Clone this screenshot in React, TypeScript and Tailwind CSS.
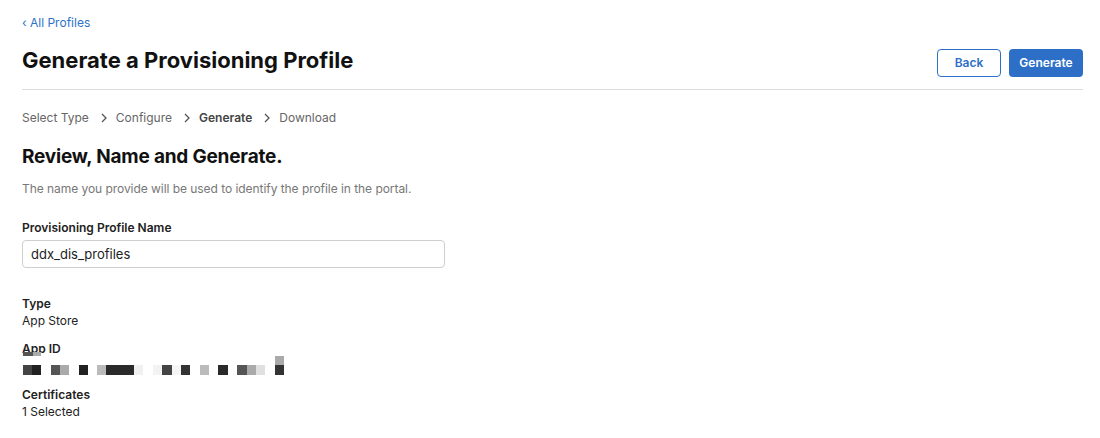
const steps = [
  { id: 1, label: "Select Type", current: false },
  { id: 2, label: "Configure", current: false },
  { id: 3, label: "Generate", current: true },
  { id: 4, label: "Download", current: false },
];

// redacted App ID, drawn as mosaic cells: [x, y, w, h, colour]
const mosaic: [number, number, number, number, string][] = [
  [1, 2, 10, 4, "#555"],
  [11, 2, 8, 4, "#aaa"],
  [253, 6, 9, 9, "#aaa"],
  [1, 15, 9, 10, "#444"],
  [10, 15, 9, 10, "#222"],
  [29, 15, 9, 10, "#555"],
  [38, 15, 9, 10, "#aaa"],
  [57, 15, 9, 10, "#222"],
  [75, 15, 9, 10, "#bbb"],
  [84, 15, 28, 10, "#2a2a2a"],
  [112, 15, 9, 10, "#f0f0f0"],
  [131, 15, 9, 10, "#f3f3f3"],
  [140, 15, 10, 10, "#444"],
  [150, 15, 9, 10, "#f5f5f5"],
  [159, 15, 9, 10, "#333"],
  [178, 15, 9, 10, "#bbb"],
  [196, 15, 10, 10, "#2a2a2a"],
  [215, 15, 10, 10, "#555"],
  [225, 15, 9, 10, "#aaa"],
  [234, 15, 9, 10, "#e0e0e0"],
  [253, 15, 9, 10, "#333"],
];

function Chevron() {
  return (
    <svg width="6" height="10" viewBox="0 0 6 10" className="ml-[12px] mr-[9px]">
      <path d="M1 1l4 4-4 4" fill="none" stroke="#555" strokeWidth="1.3" />
    </svg>
  );
}

export default function App() {
  return (
    <div className="min-h-screen bg-white pl-[22px] pr-[17px] pt-[14px] font-['Inter','Liberation_Sans',sans-serif] text-[#1d1d1f]">
      <a className="block text-[12px] leading-[18px] text-[#2e72c8]">‹ All Profiles</a>

      <div className="mt-[14px] flex items-start justify-between border-b border-[#dcdcdc] pb-[12px]">
        <h1 className="text-[22px] font-bold leading-[28px] text-[#111]">
          Generate a Provisioning Profile
        </h1>
        <div className="mt-[3px] flex gap-2">
          <button className="h-[28px] w-[64px] rounded-[4px] border border-[#2d6fc7] bg-white text-[12px] font-semibold text-[#2d6fc7]">
            Back
          </button>
          <button className="h-[28px] w-[74px] rounded-[4px] bg-[#2d6fc7] text-[12px] font-semibold text-white">
            Generate
          </button>
        </div>
      </div>

      <div className="mt-[19px] flex items-center text-[12px] leading-[18px] text-[#666]">
        {steps.map((step, index) => (
          <div key={step.id} className="flex items-center">
            {index > 0 && <Chevron />}
            <span className={step.current ? "font-semibold text-[#444]" : ""}>{step.label}</span>
          </div>
        ))}
      </div>

      <h2 className="mt-[18px] text-[19px] font-bold leading-[24px] tracking-[-0.2px] text-[#111]">
        Review, Name and Generate.
      </h2>
      <p className="mt-[11px] text-[12px] leading-[18px] tracking-[-0.05px] text-[#777]">
        The name you provide will be used to identify the profile in the portal.
      </p>

      <label className="mt-[21px] block text-[12px] font-semibold leading-[18px] text-[#222]">
        Provisioning Profile Name
      </label>
      <input
        readOnly
        value="ddx_dis_profiles"
        className="mt-[3px] block h-[28px] w-[423px] rounded-[4px] border border-[#cfcfcf] px-[8px] text-[13px] text-[#222] outline-none"
      />

      <div className="mt-[27px] text-[12px] leading-[17px] text-[#222]">
        <div className="font-semibold">Type</div>
        <div>App Store</div>

        <div className="mt-[11px] font-semibold">App ID</div>
        <svg width="270" height="26" viewBox="0 0 270 26" className="-mt-[7px] block">
          {mosaic.map(([x, y, w, h, c], i) => (
            <rect key={i} x={x} y={y} width={w} height={h} fill={c} />
          ))}
        </svg>

        <div className="mt-[10px] font-semibold">Certificates</div>
        <div>1 Selected</div>
      </div>
    </div>
  );
}
